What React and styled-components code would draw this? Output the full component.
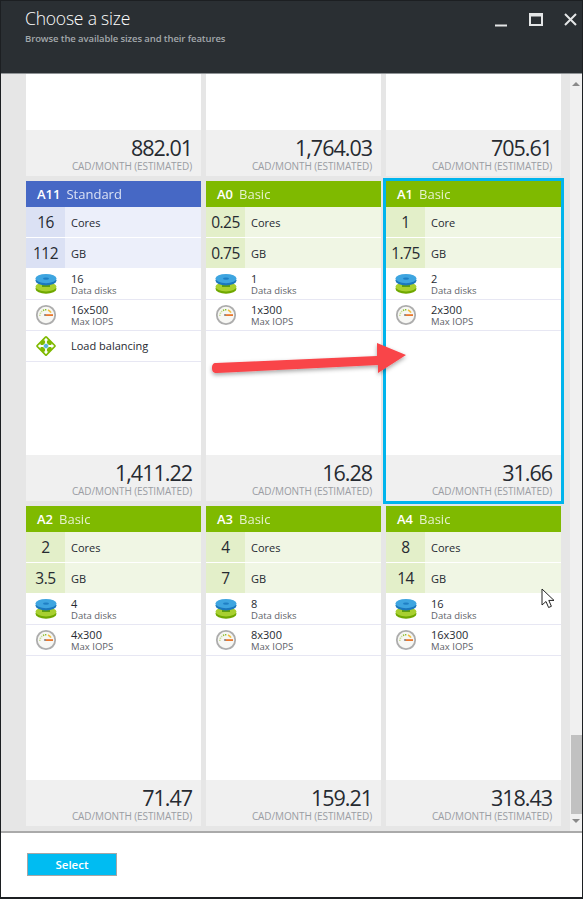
import styled, { createGlobalStyle } from "styled-components";

const GlobalStyle = createGlobalStyle`
  html, body {
    margin: 0;
    padding: 0;
    background: #fff;
  }
  * {
    box-sizing: border-box;
  }
`;

const palette = {
  standard: { head: "#4668c5", row: "#ecEffa", num: "#dbe1f4" },
  basic: { head: "#7fba00", row: "#f0f6e4", num: "#e3efc9" },
};

const Frame = styled.div`
  position: relative;
  width: 583px;
  height: 899px;
  display: flex;
  flex-direction: column;
  overflow: hidden;
  border: 1px solid #1c1f22;
  border-bottom-width: 2px;
  font-family: "Open Sans", "Noto Sans", sans-serif;
  color: #262a31;
`;

const Header = styled.header`
  height: 73px;
  flex: none;
  display: flex;
  justify-content: space-between;
  padding: 6px 5px 0 24px;
  background: #2a2f33;
  border-bottom: 1px solid #8f9396;
`;

const Title = styled.h1`
  margin: 0;
  font-size: 17.5px;
  line-height: 22px;
  font-weight: 300;
  letter-spacing: -0.2px;
  color: #fff;
`;

const Subtitle = styled.p`
  margin: 3px 0 0;
  font-size: 9.5px;
  line-height: 13px;
  font-weight: 600;
  letter-spacing: -0.1px;
  color: #a3a8ac;
`;

const WindowIcons = styled.svg`
  width: 82px;
  height: 20px;
  margin-top: 5px;
`;

const Body = styled.div`
  flex: 1;
  min-height: 0;
  display: flex;
  background: #e6e6e6;
`;

const Scroller = styled.div`
  flex: 1;
  min-width: 0;
  overflow: hidden;
  padding-left: 25px;
  display: grid;
  grid-template-columns: repeat(3, 175px);
  grid-auto-rows: max-content;
  gap: 5px;
`;

const Scrollbar = styled.div`
  width: 12px;
  flex: none;
  display: flex;
  flex-direction: column;
  align-items: center;
  background: #f0f0f0;
`;

const ArrowGlyph = styled.div`
  width: 0;
  height: 0;
  margin: ${({ $up }) => ($up ? "8px 0 auto" : "5px 0 8px")};
  border-left: 4px solid transparent;
  border-right: 4px solid transparent;
  border-${({ $up }) => ($up ? "bottom" : "top")}: 4px solid #8a8a8a;
`;

const Thumb = styled.div`
  width: 11px;
  height: 79px;
  margin-left: 1px;
  background: #c1c1c1;
`;

const Card = styled.article`
  height: ${({ $cropped }) => ($cropped ? "102px" : "320px")};
  display: flex;
  flex-direction: column;
  background: #fff;
  ${({ $selected }) => $selected && "outline: 3px solid #00b4ec;"}
`;

const CardHead = styled.div`
  height: 26px;
  display: flex;
  align-items: center;
  gap: 6px;
  padding-left: 11px;
  font-size: 13px;
  background: ${({ $tier }) => palette[$tier].head};
  color: #fff;
`;

const SizeName = styled.strong`
  font-weight: 600;
`;

const TierName = styled.span`
  opacity: 0.8;
`;

const StatRow = styled.div`
  height: 30px;
  margin-bottom: 1px;
  display: flex;
  align-items: center;
  background: ${({ $tier }) => palette[$tier].row};
  &:nth-of-type(3) {
    margin-bottom: 0;
  }
`;

const StatValue = styled.div`
  width: 39px;
  height: 100%;
  display: flex;
  align-items: center;
  justify-content: center;
  font-size: 15.5px;
  letter-spacing: -0.5px;
  background: ${({ $tier }) => palette[$tier].num};
`;

const StatLabel = styled.div`
  margin-left: 6px;
  font-size: 11px;
`;

const Features = styled.div`
  padding-top: 1px;
`;

const Feature = styled.div`
  height: 31px;
  display: flex;
  align-items: center;
  border-bottom: 1px solid #e7e7f3;
`;

const FeatureIcon = styled.svg`
  width: 22px;
  height: 22px;
  margin: 0 14px 0 9px;
  flex: none;
`;

const FeatureText = styled.div`
  display: flex;
  flex-direction: column;
`;

const FeatureValue = styled.div`
  font-size: 11px;
  line-height: 12px;
`;

const FeatureCaption = styled.div`
  font-size: 9.5px;
  line-height: 11px;
  color: #5e6269;
`;

const PriceBox = styled.div`
  margin-top: auto;
  height: 46px;
  padding: 5px 9px 0 0;
  display: flex;
  flex-direction: column;
  align-items: flex-end;
  background: #f0f0f0;
`;

const Price = styled.div`
  font-size: 21.5px;
  line-height: 25px;
  letter-spacing: -1px;
`;

const PriceCaption = styled.div`
  font-size: 10px;
  line-height: 12px;
  letter-spacing: -0.1px;
  color: #9a9da3;
`;

const Footer = styled.footer`
  height: 66px;
  flex: none;
  padding: 20px 0 0 26px;
  background: #fff;
  border-top: 2px solid #aaa;
`;

const SelectButton = styled.button`
  display: block;
  width: 90px;
  height: 23px;
  padding: 0;
  border: 1px solid #a6a6a6;
  background: #00bcf2;
  color: #fff;
  font-family: inherit;
  font-size: 11.5px;
  font-weight: 600;
`;

const Annotation = styled.svg`
  position: absolute;
  left: 204px;
  top: 334px;
  width: 210px;
  height: 50px;
`;

const Cursor = styled.svg`
  position: absolute;
  left: 540px;
  top: 587px;
  width: 14px;
  height: 21px;
`;

const DiskIcon = () => (
  <FeatureIcon viewBox="0 0 22 22">
    <ellipse cx="11" cy="15.8" rx="10.5" ry="5" fill="#6fa800" />
    <ellipse cx="11" cy="13.8" rx="10.5" ry="4.6" fill="#a8d030" />
    <rect x="7" y="7" width="8" height="7" fill="#5e9e10" />
    <ellipse cx="11" cy="7.4" rx="10.5" ry="5" fill="#1b78bd" />
    <ellipse cx="11" cy="5.6" rx="10.5" ry="4.6" fill="#3ea5e0" />
    <ellipse cx="11" cy="5.6" rx="3" ry="1.2" fill="#1f7fc4" />
  </FeatureIcon>
);

const GaugeIcon = () => (
  <FeatureIcon viewBox="0 0 22 22">
    <circle cx="11" cy="11" r="9.2" fill="#f7f7f4" stroke="#adadad" strokeWidth="1.8" />
    <path d="M4.8 12a6.2 6.2 0 0 1 3-5.3" fill="none" stroke="#c8dc9a" strokeWidth="1.6" strokeDasharray="1.3 0.8" />
    <path d="M8 6.5a6.2 6.2 0 0 1 4-.7" fill="none" stroke="#8dbf2e" strokeWidth="1.6" strokeDasharray="1.3 0.8" />
    <path d="M13 6a6 6 0 0 1 3 2.6" fill="none" stroke="#f0c040" strokeWidth="1.6" />
    <rect x="10" y="10.2" width="8" height="1.8" fill="#e8772e" />
    <circle cx="10" cy="11" r="1.1" fill="#8a8a8a" />
  </FeatureIcon>
);

const BalanceIcon = () => (
  <FeatureIcon viewBox="0 0 22 22">
    <rect x="3.6" y="3.6" width="14.8" height="14.8" rx="1.5" transform="rotate(45 11 11)" fill="#7fba00" />
    <path
      d="M11 2.8 13.4 5.6H11.9V9H10.1V5.6H8.6ZM11 19.2 8.6 16.4H10.1V13H11.9V16.4H13.4ZM2.8 11 5.6 8.6V10.1H9V11.9H5.6V13.4ZM19.2 11 16.4 13.4V11.9H13V10.1H16.4V8.6Z"
      fill="#fff"
    />
    <circle cx="11" cy="11" r="2.6" fill="#59b4d9" stroke="#fff" strokeWidth="0.6" />
  </FeatureIcon>
);

const PriceFooter = ({ price }) => (
  <PriceBox>
    <Price>{price}</Price>
    <PriceCaption>CAD/MONTH (ESTIMATED)</PriceCaption>
  </PriceBox>
);

const SizeCard = ({ size }) => (
  <Card $selected={size.selected}>
    <CardHead $tier={size.tier}>
      <SizeName>{size.name}</SizeName>
      <TierName>{size.tier === "basic" ? "Basic" : "Standard"}</TierName>
    </CardHead>
    <StatRow $tier={size.tier}>
      <StatValue $tier={size.tier}>{size.cores}</StatValue>
      <StatLabel>{size.cores === "1" ? "Core" : "Cores"}</StatLabel>
    </StatRow>
    <StatRow $tier={size.tier}>
      <StatValue $tier={size.tier}>{size.gb}</StatValue>
      <StatLabel>GB</StatLabel>
    </StatRow>
    <Features>
      <Feature>
        <DiskIcon />
        <FeatureText>
          <FeatureValue>{size.disks}</FeatureValue>
          <FeatureCaption>Data disks</FeatureCaption>
        </FeatureText>
      </Feature>
      <Feature>
        <GaugeIcon />
        <FeatureText>
          <FeatureValue>{size.iops}</FeatureValue>
          <FeatureCaption>Max IOPS</FeatureCaption>
        </FeatureText>
      </Feature>
      {size.balance && (
        <Feature>
          <BalanceIcon />
          <FeatureValue>Load balancing</FeatureValue>
        </Feature>
      )}
    </Features>
    <PriceFooter price={size.price} />
  </Card>
);

const croppedPrices = ["882.01", "1,764.03", "705.61"];

const sizes = [
  { name: "A11", tier: "standard", cores: "16", gb: "112", disks: "16", iops: "16x500", balance: true, price: "1,411.22" },
  { name: "A0", tier: "basic", cores: "0.25", gb: "0.75", disks: "1", iops: "1x300", price: "16.28" },
  { name: "A1", tier: "basic", cores: "1", gb: "1.75", disks: "2", iops: "2x300", price: "31.66", selected: true },
  { name: "A2", tier: "basic", cores: "2", gb: "3.5", disks: "4", iops: "4x300", price: "71.47" },
  { name: "A3", tier: "basic", cores: "4", gb: "7", disks: "8", iops: "8x300", price: "159.21" },
  { name: "A4", tier: "basic", cores: "8", gb: "14", disks: "16", iops: "16x300", price: "318.43" },
];

const App = () => (
  <>
    <GlobalStyle />
    <Frame>
      <Header>
        <div>
          <Title>Choose a size</Title>
          <Subtitle>Browse the available sizes and their features</Subtitle>
        </div>
        <WindowIcons viewBox="0 0 82 20" fill="none" stroke="#e4e6e7">
          <path d="M0 13.5H12" strokeWidth="2" />
          <path d="M35 2H47V13H35ZM35 3.5H47" strokeWidth="2" />
          <path d="M70 2 81 13M81 2 70 13" strokeWidth="2" />
        </WindowIcons>
      </Header>
      <Body>
        <Scroller>
          {croppedPrices.map((price) => (
            <Card key={price} $cropped>
              <PriceFooter price={price} />
            </Card>
          ))}
          {sizes.map((size) => (
            <SizeCard key={size.name} size={size} />
          ))}
        </Scroller>
        <Scrollbar>
          <ArrowGlyph $up />
          <Thumb />
          <ArrowGlyph />
        </Scrollbar>
      </Body>
      <Footer>
        <SelectButton>Select</SelectButton>
      </Footer>
      <Annotation viewBox="0 0 210 50">
        <defs>
          <filter id="arrowShadow" x="-10%" y="-30%" width="120%" height="170%">
            <feDropShadow dx="0" dy="2" stdDeviation="2" floodColor="#000" floodOpacity="0.35" />
          </filter>
        </defs>
        <path
          d="M11 28 172 21 172 8 201 20 173 38 173 30 12 38C8 38 7 36 7 33 7 30 8 28 11 28Z"
          fill="#f9444a"
          filter="url(#arrowShadow)"
        />
      </Annotation>
      <Cursor viewBox="0 0 14 21">
        <path d="M1 1V17L5 13.5 7.6 19.5 10.4 18.3 7.8 12.4H13Z" fill="#fff" stroke="#222" strokeWidth="1" />
      </Cursor>
    </Frame>
  </>
);

export default App;
